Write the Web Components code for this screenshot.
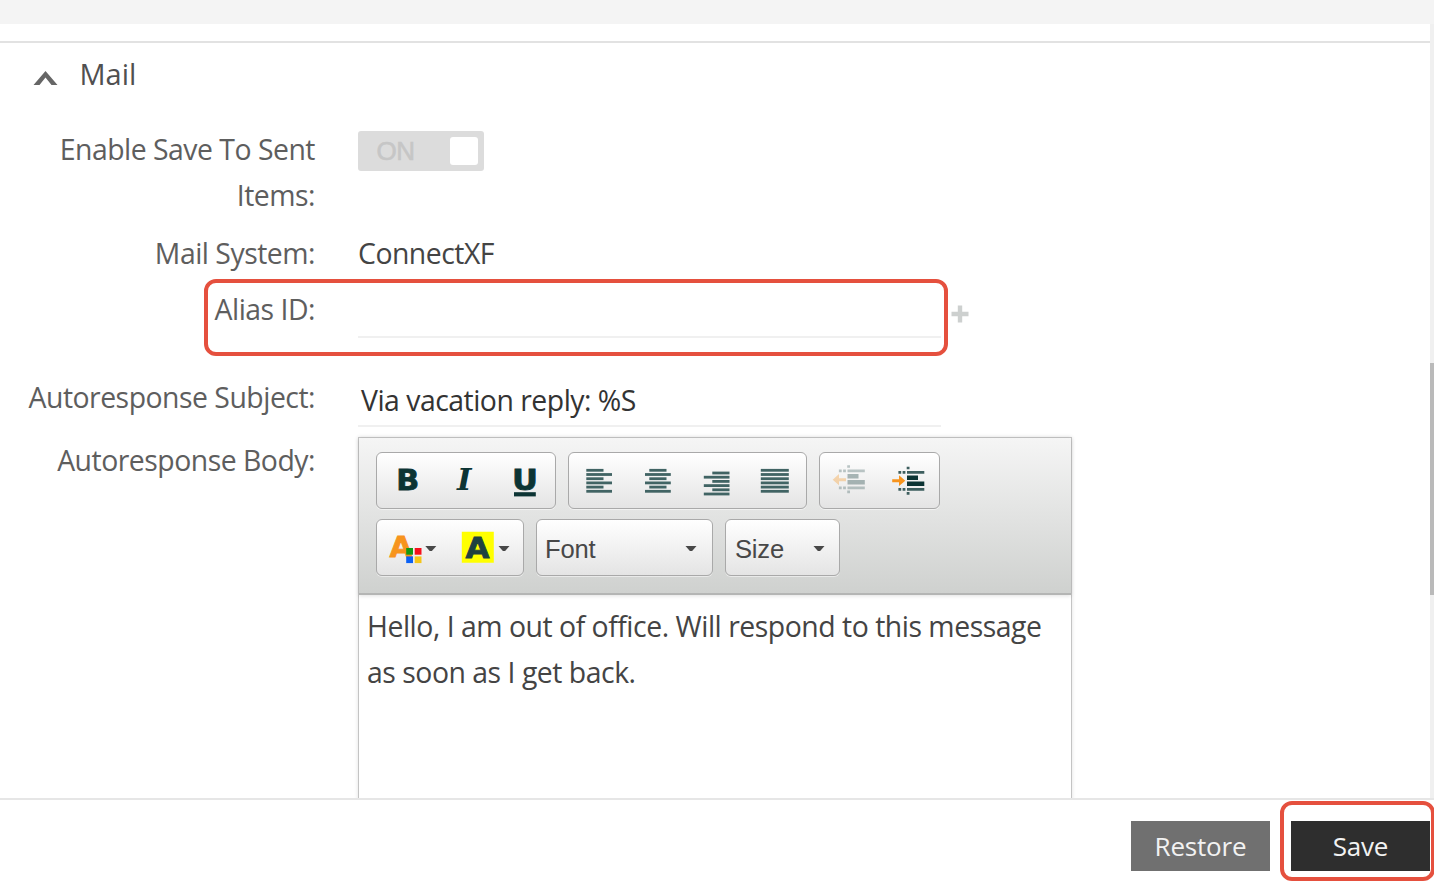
<!DOCTYPE html>
<html lang="en">
<head>
<meta charset="utf-8">
<title>Mail settings</title>
<style>
    body {
        margin: 0;
        background: #fff;
        font-family: "Open Sans", sans-serif;
        font-size: 28.4px;
        letter-spacing: -0.5px;
        line-height: 46px;
        color: #5e5e5e;
    }
</style>
</head>
<body>
<settings-page>
    <settings-section heading="Mail">
        <form-row label="Enable Save To Sent Items:" style="height: 103.5px">
            <toggle-switch>ON</toggle-switch>
        </form-row>
        <form-row label="Mail System:" style="height: 56px">
            <span style="color: #444">ConnectXF</span>
        </form-row>
        <form-row label="Alias ID:" marked style="height: 88px">
            <text-field style="height: 52.5px"></text-field>
            <add-button></add-button>
        </form-row>
        <form-row label="Autoresponse Subject:" style="height: 63px">
            <text-field style="height: 53px">Via vacation reply: %S</text-field>
        </form-row>
        <form-row label="Autoresponse Body:">
            <rich-editor>Hello, I am out of office. Will respond to this message as soon as I get back.</rich-editor>
        </form-row>
    </settings-section>
    <action-button slot="actions">Restore</action-button>
    <action-button slot="actions" primary marked>Save</action-button>
</settings-page>

<script>
function attach(el, html) {
    const template = document.createElement('template');
    template.innerHTML = html;
    el.attachShadow({mode: 'open'});
    el.shadowRoot.appendChild(template.content.cloneNode(true));
}

class SettingsPage extends HTMLElement {
    constructor() {
        super();
        attach(this, `
            <style>
                :host { display: flex; flex-direction: column; height: 881px; overflow: hidden; }
                .top { flex: none; height: 24px; background: #f4f4f4; }
                .main { flex: 1; min-height: 0; display: flex; }
                .content { flex: 1; min-width: 0; overflow: hidden; }
                .scroll { display: flow-root; width: 4px; background: #f0f0f0; }
                .thumb { height: 232px; margin-top: 339px; background: #bababa; }
                .footer {
                    flex: none;
                    box-sizing: border-box;
                    height: 83px;
                    border-top: 2px solid #e6e6e6;
                    padding: 21px 4px 0 0;
                    display: flex;
                    justify-content: flex-end;
                    gap: 21px;
                }
            </style>
            <div class="top"></div>
            <div class="main">
                <div class="content"><slot></slot></div>
                <div class="scroll"><div class="thumb"></div></div>
            </div>
            <div class="footer"><slot name="actions"></slot></div>
        `);
    }
}

class SettingsSection extends HTMLElement {
    constructor() {
        super();
        attach(this, `
            <style>
                :host { display: block; margin-top: 16.5px; border-top: 2px solid #e2e2e2; }
                header { display: flex; align-items: center; gap: 21.5px; padding: 8px 0 0 33px; margin-bottom: 29.5px; color: #505050; }
                svg { position: relative; top: 4px; }
                h2 { margin: 0; font-size: 29px; font-weight: 400; letter-spacing: 0; }
            </style>
            <header>
                <svg width="25" height="16" viewBox="0 0 25 16"><path d="M0.5 15 L12.5 1 L24.5 15 H18.5 L12.5 7.5 L6.5 15 Z" fill="#666"/></svg>
                <h2></h2>
            </header>
            <slot></slot>
        `);
        this.shadowRoot.querySelector('h2').textContent = this.getAttribute('heading');
    }
}

class FormRow extends HTMLElement {
    constructor() {
        super();
        attach(this, `
            <style>
                :host { display: flex; align-items: flex-start; gap: 43px; position: relative; }
                label { flex: none; width: 265px; padding-left: 50px; text-align: right; }
                label.wide { width: 315px; padding-left: 0; }
                .value { display: flex; align-items: flex-start; }
                .mark {
                    display: none;
                    position: absolute;
                    left: 204px;
                    top: -6.5px;
                    width: 736px;
                    height: 69px;
                    border: 4px solid #e5503e;
                    border-radius: 12px;
                }
                :host([marked]) .mark { display: block; }
            </style>
            <label></label>
            <div class="value"><slot></slot></div>
            <div class="mark"></div>
        `);
        const label = this.shadowRoot.querySelector('label');
        label.textContent = this.getAttribute('label');
        // only the long label should wrap
        if (label.textContent.length < 25) label.className = 'wide';
    }
}

class ToggleSwitch extends HTMLElement {
    constructor() {
        super();
        attach(this, `
            <style>
                :host {
                    box-sizing: border-box;
                    display: flex;
                    justify-content: space-between;
                    align-items: center;
                    width: 126px;
                    height: 40px;
                    margin-top: 5px;
                    padding: 0 6px 0 18.5px;
                    border-radius: 3px;
                    background: #dcdcdc;
                    color: #c6c6c6;
                    font: 26px "Liberation Sans", sans-serif;
                    -webkit-text-stroke: 0.6px #c6c6c6;
                }
                i { width: 28px; height: 28px; background: #fff; border-radius: 3px; }
            </style>
            <span><slot></slot></span><i></i>
        `);
    }
}

class TextField extends HTMLElement {
    constructor() {
        super();
        attach(this, `
            <style>
                :host {
                    box-sizing: border-box;
                    display: block;
                    width: 583px;
                    padding: 3px 0 0 3px;
                    border-bottom: 2px solid #f0f0f0;
                    color: #333;
                }
            </style>
            <slot></slot>
        `);
    }
}

class AddButton extends HTMLElement {
    constructor() {
        super();
        attach(this, `
            <style>
                :host { display: block; margin: 19.5px 0 0 9.5px; line-height: 0; }
            </style>
            <svg width="18" height="18" viewBox="0 0 18 18"><path d="M9 0.5V17.5M0.5 9H17.5" stroke="#cdd0cf" stroke-width="4.4"/></svg>
        `);
    }
}

class ToolIcon extends HTMLElement {
    constructor() {
        super();
        attach(this, `
            <style>
                :host { display: block; flex: 1; height: 55px; line-height: 0; letter-spacing: 0; }
                svg { display: block; overflow: visible; }
                .bold { font: bold 29px "DejaVu Sans", sans-serif; stroke-width: 0.8px; }
                .italic { font: italic bold 29px "DejaVu Serif", serif; }
            </style>
            <svg width="59" height="55" viewBox="0 0 59 55">${ToolIcon.shapes[this.getAttribute('name')]}</svg>
        `);
    }
}

const ink = '#0c3434';
const caret = x => `<path d="M${x} 26h11l-4.4 4.9h-2.2z" fill="#484848"/>`;

// six horizontal bars, each given as [left, right]
function bars(short, long, top) {
    return [0, 1, 2, 3, 4, 5].map(i => {
        const [a, b] = i % 2 ? long : short;
        return `<path d="M${a} ${top + i * 4.2}H${b}" stroke="#416464" stroke-width="2.8"/>`;
    }).join('');
}

const indentLines = `
    <path d="M27.5 19.4H44.8M27.5 36.4H44.8" stroke="#3d5e5e" stroke-width="2.6"/>
    <path d="M27.5 24.7H38.5M27.5 30.8H44.8" stroke="${ink}" stroke-width="4.6"/>
    <path d="M18.9 19.4h2.8M23.1 19.4h2.8M18.9 36.4h2.8M23.1 36.4h2.8M27.2 15h2.8M27.2 40.4h2.8" stroke="#3d5e5e" stroke-width="2.6"/>`;

ToolIcon.shapes = {
    bold: `<text class="bold" x="19.2" y="37.3" textLength="23" lengthAdjust="spacingAndGlyphs" fill="${ink}" stroke="${ink}">B</text>`,
    italic: `<text class="italic" x="21" y="37.3" textLength="14.5" lengthAdjust="spacingAndGlyphs" fill="${ink}">I</text>`,
    underline: `<text class="bold" x="16" y="37.3" textLength="26" lengthAdjust="spacingAndGlyphs" fill="${ink}" stroke="${ink}">U</text>
        <rect x="18" y="39.2" width="21.8" height="4.2" fill="${ink}"/>`,
    left: bars([17.3, 34.5], [17.3, 43], 17.3),
    center: bars([21.3, 38.5], [17, 42.8], 17.3),
    right: bars([24.3, 41.5], [15.8, 41.5], 20),
    justify: bars([13.8, 41.8], [13.8, 41.8], 17.3),
    outdent: `<g opacity="0.33" transform="translate(0 -1.5)">${indentLines}
        <path d="M12.7 28.2l6.3-5.6v4.1h7v3h-7v4.1z" fill="#f7941d"/></g>`,
    indent: `<g transform="translate(-0.5 0)">${indentLines}<path d="M25.8 27.7l-6.3-5.4v3.9h-6.8v3h6.8v3.9z" fill="#f7941d"/></g>`,
    color: `<text class="bold" x="12.6" y="36.5" textLength="23" lengthAdjust="spacingAndGlyphs" fill="#f7941d" stroke="#f7941d">A</text>
        <path d="M29.2 28h6.8v6.7h-6.8z" fill="#129a12"/><path d="M37.7 28h6.8v6.7h-6.8z" fill="#f5101c"/>
        <path d="M29.2 36.4h6.8v6.7h-6.8z" fill="#0a60f5"/><path d="M37.7 36.4h6.8v6.7h-6.8z" fill="#f5c518"/>
        ${caret(48.3)}`,
    highlight: `<path d="M11.8 11.7h32v31h-32z" fill="#ff0"/>
        <text class="bold" x="15.6" y="38" textLength="24" lengthAdjust="spacingAndGlyphs" fill="#1f4140" stroke="#1f4140">A</text>
        ${caret(48.5)}`,
    caret: caret(0.5)
};

class RichEditor extends HTMLElement {
    constructor() {
        super();
        attach(this, `
            <style>
                :host {
                    box-sizing: border-box;
                    display: block;
                    width: 714px;
                    height: 500px;
                    margin-top: 0.5px;
                    border: 1.5px solid #c4c4c4;
                    box-shadow: 0 0 4px rgba(0, 0, 0, 0.12);
                    color: #444;
                }
                .toolbar {
                    box-sizing: border-box;
                    height: 157px;
                    padding: 14px 17px 0;
                    background: linear-gradient(#f5f5f5, #cfd1cf);
                    border-bottom: 2px solid #b4b5b4;
                    box-shadow: 0 1px 4px rgba(0, 0, 0, 0.12);
                    display: flex;
                    flex-wrap: wrap;
                    gap: 10px 12px;
                    align-content: flex-start;
                }
                .group {
                    box-sizing: border-box;
                    height: 57px;
                    display: flex;
                    border: 1.5px solid #a9a9a9;
                    border-radius: 6px;
                    background: linear-gradient(#fff, #e4e4e4);
                    box-shadow: 0 1px 0 rgba(255, 255, 255, 0.5);
                }
                .select {
                    font: 25.6px/58px "Liberation Sans", sans-serif;
                    letter-spacing: -0.2px;
                    color: #484848;
                    padding-left: 8.5px;
                    justify-content: space-between;
                }
                .select tool-icon { flex: none; width: 26.5px; }
                .text { padding: 8px 8px; letter-spacing: -0.48px; }
            </style>
            <div class="toolbar">
                <div class="group" style="width: 180px">
                    <tool-icon name="bold"></tool-icon><tool-icon name="italic"></tool-icon><tool-icon name="underline"></tool-icon>
                </div>
                <div class="group" style="width: 239px">
                    <tool-icon name="left"></tool-icon><tool-icon name="center"></tool-icon><tool-icon name="right"></tool-icon><tool-icon name="justify"></tool-icon>
                </div>
                <div class="group" style="width: 121px">
                    <tool-icon name="outdent"></tool-icon><tool-icon name="indent"></tool-icon>
                </div>
                <div class="group" style="width: 147.5px">
                    <tool-icon name="color"></tool-icon><tool-icon name="highlight"></tool-icon>
                </div>
                <div class="group select" style="width: 177px"><span>Font</span><tool-icon name="caret"></tool-icon></div>
                <div class="group select" style="width: 115.5px; padding-left: 9.5px"><span>Size</span><tool-icon name="caret"></tool-icon></div>
            </div>
            <div class="text"><slot></slot></div>
        `);
    }
}

class ActionButton extends HTMLElement {
    constructor() {
        super();
        attach(this, `
            <style>
                :host { display: block; position: relative; width: 139px; height: 50px; }
                button {
                    width: 100%;
                    height: 100%;
                    padding: 0;
                    border: 0;
                    background: #707070;
                    color: #f2f2f2;
                    font: 26px/50px "Open Sans", sans-serif;
                    letter-spacing: -0.2px;
                }
                :host([primary]) button { background: #2e2e2e; }
                .mark {
                    display: none;
                    position: absolute;
                    left: -11px;
                    top: -20px;
                    width: 147px;
                    height: 72px;
                    border: 4px solid #e5503e;
                    border-radius: 12px;
                }
                :host([marked]) .mark { display: block; }
            </style>
            <button><slot></slot></button>
            <div class="mark"></div>
        `);
    }
}

customElements.define('settings-page', SettingsPage);
customElements.define('settings-section', SettingsSection);
customElements.define('form-row', FormRow);
customElements.define('toggle-switch', ToggleSwitch);
customElements.define('text-field', TextField);
customElements.define('add-button', AddButton);
customElements.define('tool-icon', ToolIcon);
customElements.define('rich-editor', RichEditor);
customElements.define('action-button', ActionButton);
</script>
</body>
</html>
